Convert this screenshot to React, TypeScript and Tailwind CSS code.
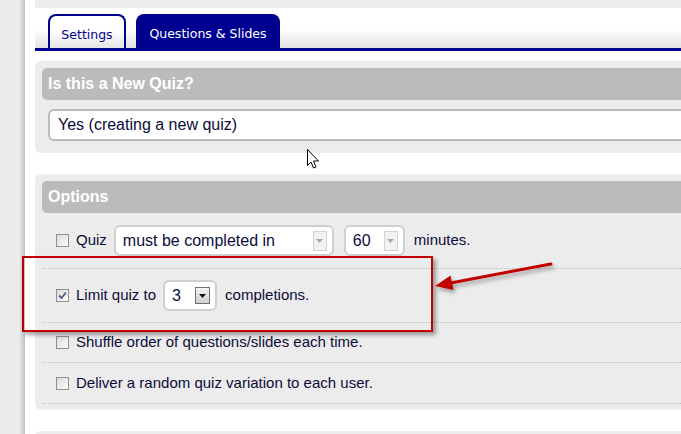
import React from "react";

const NAVY = "#000090";

function Checkbox({ checked = false }: { checked?: boolean }) {
  return (
    <div className="w-[13px] h-[13px] border border-[#8e8f8f] bg-gradient-to-br from-[#dcdcdc] to-[#fbfbfb] flex items-center justify-center shrink-0">
      {checked && (
        <svg width="9" height="9" viewBox="0 0 9 9">
          <path d="M1 4.5 L3.5 7 L8 1.5" fill="none" stroke="#4b5a88" strokeWidth="1.8" />
        </svg>
      )}
    </div>
  );
}

function ArrowBox({ active = false }: { active?: boolean }) {
  return active ? (
    <div className="w-[15px] h-[17px] border border-[#6f6f6f] bg-gradient-to-b from-[#f4f4f4] to-[#cfcfcf] flex items-center justify-center">
      <svg width="7" height="4" viewBox="0 0 7 4">
        <path d="M0 0 H7 L3.5 4 Z" fill="#111" />
      </svg>
    </div>
  ) : (
    <div className="w-[14px] h-[20px] border border-[#d2d2d2] bg-[#f2f2f2] flex items-center justify-center">
      <svg width="7" height="4" viewBox="0 0 7 4">
        <path d="M0 0 H7 L3.5 4 Z" fill="#a8a8a8" />
      </svg>
    </div>
  );
}

function Select({
  value,
  width,
  active = false,
}: {
  value: string;
  width: string;
  active?: boolean;
}) {
  return (
    <div
      className={`${width} h-[31px] border-2 border-[#cfcfcf] rounded-[6px] bg-white flex items-center justify-between pl-[7px] pr-[5px] shrink-0`}
    >
      <span className="text-[16px] text-[#0b0b3b]">{value}</span>
      <ArrowBox active={active} />
    </div>
  );
}

export default function App() {
  return (
    <div
      className="relative w-[681px] h-[434px] overflow-hidden bg-white flex"
      style={{ fontFamily: '"Liberation Sans", Arial, sans-serif' }}
    >
      {/* left strip */}
      <div className="w-[20px] bg-[#ebebeb] shrink-0" />
      <div className="w-[5px] bg-gradient-to-r from-[#e2e2e2] to-[#c2c2c2] shrink-0" />
      <div className="w-[10px] bg-white shrink-0" />

      {/* main column */}
      <div className="flex-1 flex flex-col min-w-0 h-[434px] overflow-hidden">
        <div className="h-[8px] bg-[#ececec] shrink-0" />

        {/* tab bar */}
        <div className="h-[43px] shrink-0 bg-gradient-to-b from-white from-[55%] to-[#e2e2e2] border-b-[3px] border-[#000090] flex items-end pl-[13px] gap-[10px]">
          <div
            className="w-[78px] h-[34px] border-2 border-b-0 border-[#000090] rounded-t-[8px] bg-gradient-to-b from-white from-[45%] to-[#e4e4e4] flex items-center justify-center pt-[6px] text-[12.5px]"
            style={{ fontFamily: '"DejaVu Sans", Tahoma, sans-serif', color: NAVY }}
          >
            Settings
          </div>
          <div
            className="w-[144px] h-[34px] bg-[#000090] rounded-t-[8px] flex items-center justify-center pt-[6px] text-[12.5px] text-white"
            style={{ fontFamily: '"DejaVu Sans", Tahoma, sans-serif' }}
          >
            Questions &amp; Slides
          </div>
        </div>

        <div className="h-[10px] shrink-0" />

        {/* panel 1 */}
        <div className="shrink-0 bg-[#ececec] rounded-l-[6px] pl-[7px] pt-[7px] pb-[12px]">
          <div className="h-[32px] bg-[#bbbbbb] rounded-l-[5px] flex items-center pl-[6px] text-[16px] font-bold text-white">
            Is this a New Quiz?
          </div>
          <div className="mt-[9px] ml-[6px] h-[32px] border-2 border-r-0 border-[#bbbbbb] rounded-l-[6px] bg-white flex items-center pl-[8px] text-[16px] text-[#0b0b3b]">
            Yes (creating a new quiz)
          </div>
        </div>

        <div className="h-[21px] shrink-0" />

        {/* panel 2 */}
        <div className="shrink-0 bg-[#ececec] rounded-l-[6px] pl-[7px] pt-[7px] pb-[6px]">
          <div className="h-[32px] bg-[#bbbbbb] rounded-l-[5px] flex items-center pl-[6px] text-[16px] font-bold text-white">
            Options
          </div>
          <div className="text-[15px] text-[#0b0b3b]">
            <div className="h-[56px] border-b border-dotted border-[#bdbdbd] flex items-center pl-[14px]">
              <Checkbox />
              <span className="ml-[7px]">Quiz</span>
              <div className="ml-[7px]">
                <Select value="must be completed in" width="w-[220px]" />
              </div>
              <div className="ml-[10px]">
                <Select value="60" width="w-[61px]" />
              </div>
              <span className="ml-[9px]">minutes.</span>
            </div>
            <div className="h-[54px] border-b border-dotted border-[#bdbdbd] flex items-center pl-[14px]">
              <Checkbox checked />
              <span className="ml-[7px]">Limit quiz to</span>
              <div className="ml-[7px]">
                <Select value="3" width="w-[54px]" active />
              </div>
              <span className="ml-[8px]">completions.</span>
            </div>
            <div className="h-[40px] border-b border-dotted border-[#bdbdbd] flex items-center pl-[14px]">
              <Checkbox />
              <span className="ml-[7px]">Shuffle order of questions/slides each time.</span>
            </div>
            <div className="h-[41px] border-b border-dotted border-[#bdbdbd] flex items-center pl-[14px]">
              <Checkbox />
              <span className="ml-[7px]">Deliver a random quiz variation to each user.</span>
            </div>
          </div>
        </div>

        <div className="h-[21px] shrink-0" />

        {/* panel 3 */}
        <div className="bg-[#ececec] rounded-tl-[6px] h-[40px] shrink-0" />
      </div>

      {/* red highlight box */}
      <div className="absolute left-[22px] top-[256px] w-[411px] h-[76px] border-2 border-[#c00000] shadow-[3px_3px_4px_rgba(0,0,0,0.35)] pointer-events-none" />

      {/* arrow + cursor overlay */}
      <svg
        className="absolute left-0 top-0 pointer-events-none"
        width="681"
        height="434"
        viewBox="0 0 681 434"
      >
        <defs>
          <filter id="sh" x="-20%" y="-50%" width="140%" height="200%">
            <feDropShadow dx="2" dy="3" stdDeviation="2" floodColor="#000" floodOpacity="0.35" />
          </filter>
        </defs>
        <g filter="url(#sh)">
          <line x1="551" y1="264" x2="448" y2="283.5" stroke="#c00000" strokeWidth="3" strokeLinecap="round" />
          <path d="M435 286 L450.5 275.5 L453.5 290 Z" fill="#c00000" />
        </g>
        {/* mouse cursor */}
        <path
          d="M307.5 149.5 L307.5 165.5 L311 162 L313.5 168 L316 167 L313.5 161 L318.5 161 Z"
          fill="#fff"
          stroke="#000"
          strokeWidth="1"
          strokeLinejoin="miter"
        />
      </svg>
    </div>
  );
}
